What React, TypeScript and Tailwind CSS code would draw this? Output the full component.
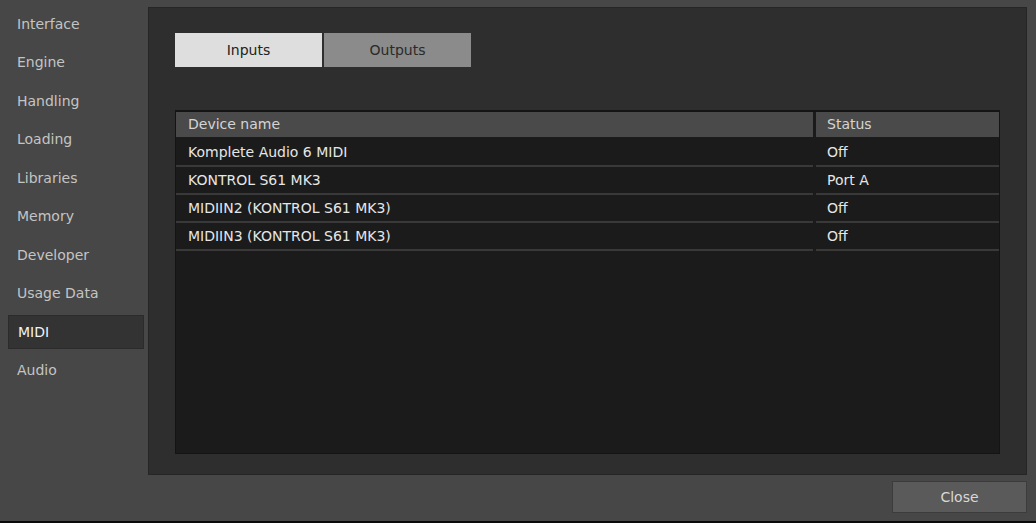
import React from "react";

const NAV = ["Interface", "Engine", "Handling", "Loading", "Libraries", "Memory", "Developer", "Usage Data", "MIDI", "Audio"];

const DEVICES = [
  { name: "Komplete Audio 6 MIDI", status: "Off" },
  { name: "KONTROL S61 MK3", status: "Port A" },
  { name: "MIDIIN2 (KONTROL S61 MK3)", status: "Off" },
  { name: "MIDIIN3 (KONTROL S61 MK3)", status: "Off" },
];

const font = "font-['DejaVu_Sans','Liberation_Sans',sans-serif]";

export default function App() {
  return (
    <div className={`w-[1036px] h-[523px] bg-[#474747] flex flex-col border-b-2 border-[#0a0a0a] text-[14px] ${font}`}>
      <div className="flex h-[475px]">
        {/* sidebar */}
        <nav className="w-[148px] shrink-0 pt-[7px] pl-[8px] pr-[4px] flex flex-col gap-[4.5px]">
          {NAV.map((item) => (
            <div
              key={item}
              className={
                item === "MIDI"
                  ? "h-[34px] px-[9px] flex items-center bg-[#333333] border border-[#2b2b2b] text-[#f2f2f2]"
                  : "h-[34px] px-[9px] flex items-center text-[#c4c4c4]"
              }
            >
              {item}
            </div>
          ))}
        </nav>

        {/* main panel */}
        <div className="flex-1 mt-[7px] mr-[9px] bg-[#2e2e2e] border border-[#262626] pt-[25px] pl-[26px] pr-[26px] pb-[20px] flex flex-col">
          <div className="flex gap-[2px]">
            <button className="w-[147px] h-[34px] bg-[#dedede] text-[#222222]">Inputs</button>
            <button className="w-[147px] h-[34px] bg-[#8b8b8b] text-[#2a2a2a]">Outputs</button>
          </div>

          <div className="mt-[43px] flex-1 bg-[#1b1b1b] border border-[#141414] border-t-2 flex flex-col">
            <div className="grid grid-cols-[1fr_183px] gap-x-[3px] h-[25px] bg-[#1b1b1b]">
              <div className="bg-[#4a4a4a] pl-[12px] flex items-center text-[#d4d4d4]">Device name</div>
              <div className="bg-[#4a4a4a] pl-[11px] flex items-center text-[#d4d4d4]">Status</div>
            </div>
            <div className="mt-[2px]">
              {DEVICES.map((d) => (
                <div key={d.name} className="grid grid-cols-[1fr_183px] gap-x-[3px] h-[28px]">
                  <div className="border-b-2 border-[#393939] pl-[12px] flex items-center text-[#e6e6e6]">{d.name}</div>
                  <div className="border-b-2 border-[#393939] pl-[11px] flex items-center text-[#e6e6e6]">{d.status}</div>
                </div>
              ))}
            </div>
          </div>
        </div>
      </div>

      {/* footer */}
      <div className="flex-1 flex justify-end pt-[6px] pr-[9px]">
        <button className="w-[135px] h-[32px] bg-[#5a5a5a] border border-[#3c3c3c] text-[#d8d8d8]">Close</button>
      </div>
    </div>
  );
}
